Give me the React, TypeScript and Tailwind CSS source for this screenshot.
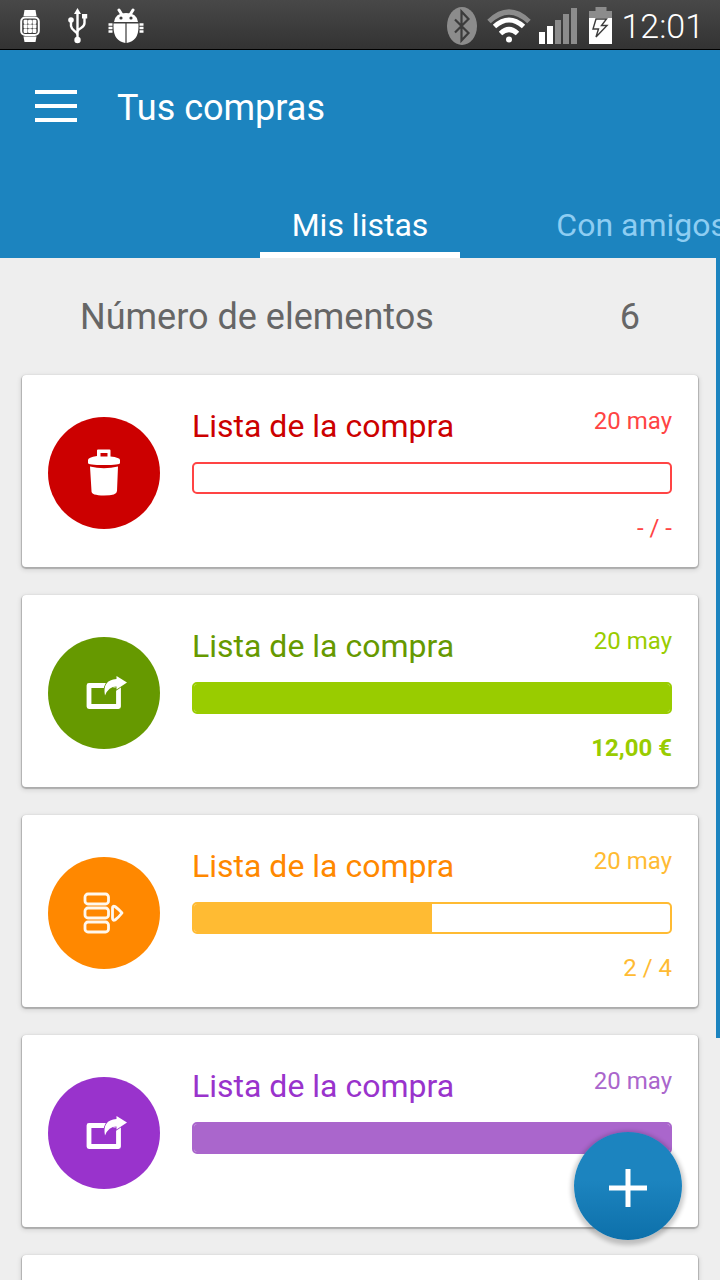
import type { ReactNode } from 'react';

// ============================================================
// Tus compras: shopping lists overview
// ============================================================

type ListColor = 'red' | 'green' | 'orange' | 'purple';

interface ShoppingList {
  id: number;
  title: string;
  date: string;
  color: ListColor;
  icon: ReactNode;
  progress: number;
  label: string;
  bold?: boolean;
}

// --cut is the outline that separates the share arrow from its frame
const COLORS: Record<ListColor, { circle: string; title: string; text: string; border: string; fill: string }> = {
  red: { circle: 'bg-[#cc0000] [--cut:#cc0000]', title: 'text-[#cc0000]', text: 'text-[#ff4444]', border: 'border-[#ff4444]', fill: 'bg-[#ff4444]' },
  green: { circle: 'bg-[#669900] [--cut:#669900]', title: 'text-[#669900]', text: 'text-[#99cc00]', border: 'border-[#99cc00]', fill: 'bg-[#99cc00]' },
  orange: { circle: 'bg-[#ff8800] [--cut:#ff8800]', title: 'text-[#ff8800]', text: 'text-[#ffbb33]', border: 'border-[#ffbb33]', fill: 'bg-[#ffbb33]' },
  purple: { circle: 'bg-[#9933cc] [--cut:#9933cc]', title: 'text-[#9933cc]', text: 'text-[#aa66cc]', border: 'border-[#aa66cc]', fill: 'bg-[#aa66cc]' },
};

// ---- List icons ----

const TrashIcon = () => (
  <svg viewBox="0 0 48 48" className="size-12" fill="currentColor" aria-hidden="true">
    <path fillRule="evenodd" d="M17 7V1.5Q17 .5 18 .5H29.500Q30.500 .5 30.500 1.500V7.500Q40 8.500 40 11V14Q40 16 24 16T8 14V11Q8 8.500 17 7ZM20.500 4V7.500H27.500V4Z" />
    <path d="M10 17.500Q24 21 38 17.500L37 42Q37 46.500 24 46.500T11.500 42Z" />
  </svg>
);

const ShareIcon = () => (
  <svg viewBox="0 0 48 48" className="size-12" aria-hidden="true">
    <path d="M9 16.500H38.500V37.500H9Z" fill="none" stroke="currentColor" strokeWidth="4.800" strokeLinejoin="round" />
    <path
      d="M36.500 7L47 13.500L36.500 20.500V17.500Q28.500 17.500 25 26.500Q22 11 36.500 10Z"
      fill="currentColor" stroke="var(--cut)" strokeWidth="1.600" paintOrder="stroke"
    />
  </svg>
);

const SortIcon = () => (
  <svg viewBox="0 0 48 48" className="size-12" fill="none" stroke="#fff8ee" strokeWidth="2.800" strokeLinejoin="round" aria-hidden="true">
    <rect x="5" y="5" width="23.500" height="10" rx="3" />
    <rect x="5" y="19" width="23.500" height="10" rx="3" />
    <rect x="5" y="33" width="23.500" height="10" rx="3" />
    <path d="M32.500 19Q32.500 16.500 35 17.500Q38.500 20 42 24Q38.500 28.500 35 31Q32.500 32 32.500 29Z" />
  </svg>
);

const LISTS: ShoppingList[] = [
  { id: 1, title: 'Lista de la compra', date: '20 may', color: 'red', icon: <TrashIcon />, progress: 0, label: '- / -' },
  { id: 2, title: 'Lista de la compra', date: '20 may', color: 'green', icon: <ShareIcon />, progress: 100, label: '12,00 €', bold: true },
  { id: 3, title: 'Lista de la compra', date: '20 may', color: 'orange', icon: <SortIcon />, progress: 50, label: '2 / 4' },
  { id: 4, title: 'Lista de la compra', date: '20 may', color: 'purple', icon: <ShareIcon />, progress: 100, label: '' },
];

// ---- Status bar ----

const WatchIcon = () => (
  <svg viewBox="0 0 20 32" className="h-8 w-5" fill="#fff" aria-hidden="true">
    <path d="M4.500 0H15.500L16.500 6H3.500ZM3.500 26.500H16.500L15.500 32H4.500Z" />
    <rect x="1.200" y="7.500" width="17.600" height="17.500" rx="4" fill="none" stroke="#fff" strokeWidth="2" />
    {[9.8, 14.3, 18.8].map((y) => [3.6, 8, 12.4].map((x) => (
      <rect key={`${x}-${y}`} x={x} y={y} width="4" height="4.100" rx="1" />
    )))}
  </svg>
);

const UsbIcon = () => (
  <svg viewBox="0 0 20 36" className="h-9 w-5" fill="#fff" aria-hidden="true">
    <path d="M9.500 0L13 6H6Z" />
    <path d="M9.500 4V31M9.500 27Q9.500 25 6.500 23T3 18V12M9.500 24Q9.500 22 13 20T16.500 15V8" fill="none" stroke="#fff" strokeWidth="2.400" />
    <circle cx="9.500" cy="32" r="3.200" />
    <circle cx="3" cy="12" r="2.800" />
    <rect x="14" y="6" width="5.200" height="4.500" />
  </svg>
);

const BugIcon = () => (
  <svg viewBox="0 0 36 36" className="size-9" aria-hidden="true">
    <path d="M11 2L13.500 6M25 2L22.500 6" stroke="#fff" strokeWidth="3" strokeLinecap="round" />
    <path d="M6 14Q7 5 18 5T30 14Z" fill="#fff" />
    <circle cx="13" cy="10" r="1.600" fill="#3e3e3e" />
    <circle cx="23" cy="10" r="1.600" fill="#3e3e3e" />
    <path d="M5.500 15.500H17.400V35Q5.500 33 5.500 19ZM18.600 15.500H30.500V19Q30.500 33 18.600 35Z" fill="#fff" />
    <path d="M.500 16.500H4.500M.500 20H4.500M.500 23.500H4.500M31.500 16.500H35.500M31.500 20H35.500M31.500 23.500H35.500" stroke="#fff" strokeWidth="2.400" />
  </svg>
);

const BluetoothIcon = () => (
  <svg viewBox="0 0 30 38" className="mr-0.5 h-[38px] w-[30px]" aria-hidden="true">
    <ellipse cx="15" cy="19" rx="15" ry="19" fill="#8c8c8c" />
    <path d="M8 12.500L21.500 26L14.500 33.500V4.500L21.500 12L8 25.500" fill="none" stroke="#3c3c3c" strokeWidth="2.200" />
  </svg>
);

const WifiIcon = () => (
  <svg viewBox="0 0 44 36" className="h-9 w-11" fill="none" strokeWidth="5" aria-hidden="true">
    <path d="M2 13.500Q22 -5.500 42 13.500" stroke="#8c8c8c" />
    <path d="M7.500 18.500Q22 5.500 36.500 18.500M13.500 25.500Q22 17.500 30.500 25.500" stroke="#fff" />
    <circle cx="22" cy="31.500" r="3" fill="#fff" />
  </svg>
);

const SignalIcon = () => (
  <svg viewBox="0 0 38 36" className="h-9 w-[38px]" aria-hidden="true">
    <path d="M0 24H6V36H0ZM8 18H14V36H8Z" fill="#fff" />
    <path d="M16 12H22V36H16ZM24 6H30V36H24ZM32 0H38V36H32Z" fill="#8c8c8c" />
  </svg>
);

const BatteryIcon = () => (
  <svg viewBox="0 0 24 37" className="ml-1 h-[37px] w-6" aria-hidden="true">
    <path d="M6.500 0H17.500V4H23V11H0V4H6.500Z" fill="#8c8c8c" />
    <path d="M0 11H23V37H0Z" fill="#fff" />
    <path d="M7 12L4 22H9.500L7 30L18 18.500H12.500L17.500 12Z" fill="none" stroke="#3c3c3c" strokeWidth="1.400" />
  </svg>
);

const StatusBar = () => (
  <div className="flex h-[50px] shrink-0 items-center justify-between border-b border-black bg-linear-to-b from-[#484848] to-[#333333] pt-0.5 pr-4 pl-5">
    <div className="flex items-center gap-7">
      <WatchIcon />
      <UsbIcon />
      <div className="-ml-2"><BugIcon /></div>
    </div>
    <div className="flex items-center gap-2">
      <BluetoothIcon />
      <WifiIcon />
      <SignalIcon />
      <BatteryIcon />
      <time className="text-[34px] leading-10 font-light text-white">12:01</time>
    </div>
  </div>
);

// ---- Card ----

const ListCard = ({ list }: { list: ShoppingList }) => {
  const c = COLORS[list.color];
  return (
    <li className="flex h-48 shrink-0 gap-8 rounded bg-white px-[26px] pt-[31px] shadow-[0_1px_1px_1px_rgba(0,0,0,0.22),0_2px_4px_2px_rgba(0,0,0,0.08)]">
      <button type="button" aria-label="Abrir lista"
        className={`mt-[11px] flex size-28 shrink-0 items-center justify-center rounded-full text-white ${c.circle}`}>
        {list.icon}
      </button>
      <div className="min-w-0 flex-1">
        <div className="flex items-start justify-between">
          <h2 className={`text-[32px] leading-10 ${c.title}`}>{list.title}</h2>
          <span className={`text-2xl leading-[30px] ${c.text}`}>{list.date}</span>
        </div>
        <div role="progressbar" aria-label={list.title} aria-valuenow={list.progress} aria-valuemin={0} aria-valuemax={100}
          className={`mt-4 h-8 overflow-hidden rounded-[5px] border-2 ${c.border}`}>
          <div className={`h-full ${c.fill}`} style={{ width: `${list.progress}%` }} />
        </div>
        <p className={`mt-4 text-right text-2xl leading-9 ${list.bold ? 'font-bold' : ''} ${c.text}`}>{list.label}</p>
      </div>
    </li>
  );
};

export default function App() {
  return (
    <div className="flex h-screen flex-col overflow-hidden bg-[#eeeeee] font-[Roboto,sans-serif]">
      <StatusBar />

      <header className="shrink-0 bg-[#1c84bf]">
        <div className="flex h-28 items-center gap-10 px-[35px]">
          <button type="button" aria-label="Menú" className="text-white">
            <svg viewBox="0 0 42 32" className="h-8 w-[42px]" fill="currentColor" aria-hidden="true">
              <path d="M0 0H42V4H0ZM0 14H42V18H0ZM0 28H42V32H0Z" />
            </svg>
          </button>
          <h1 className="pt-1 text-4xl text-white">Tus compras</h1>
        </div>

        <div role="tablist" className="grid h-24 grid-cols-[minmax(0,1fr)_auto_minmax(0,1fr)] overflow-hidden text-[32px] leading-10">
          <span />
          <button type="button" role="tab" aria-selected="true"
            className="border-b-6 border-white px-8 pt-10 pb-1 text-white">
            Mis listas
          </button>
          <button type="button" role="tab" aria-selected="false"
            className="pt-10 pb-2.5 pl-24 text-left whitespace-nowrap text-[#8ecdf2]">
            Con amigos
          </button>
        </div>
      </header>

      <main className="relative min-h-0 flex-1 overflow-hidden">
        <div className="flex h-[117px] items-center justify-between px-20 text-4xl text-[#666666]">
          <span>Número de elementos</span>
          <span>6</span>
        </div>
        <ul className="flex flex-col gap-7 px-[22px]">
          {LISTS.map((list) => <ListCard key={list.id} list={list} />)}
          <li className="h-48 shrink-0 rounded bg-white shadow-[0_1px_1px_1px_rgba(0,0,0,0.22),0_2px_4px_2px_rgba(0,0,0,0.08)]" />
        </ul>
        {/* scroll indicator */}
        <div className="absolute top-0 right-0 h-[76.3%] w-1 bg-[#1c84bf]" />
      </main>

      <button type="button" aria-label="Añadir lista"
        className="fixed right-[38px] bottom-10 flex size-27 items-center justify-center rounded-full bg-linear-to-b from-[#1c84bf] from-45% to-[#0d70aa] pt-1 text-white shadow-[0_2px_4px_3px_rgba(0,0,0,0.2)]">
        <svg viewBox="0 0 38 38" className="size-[38px]" fill="currentColor" aria-hidden="true">
          <path d="M16.500 0H21.500V16.500H38V21.500H21.500V38H16.500V21.500H0V16.500H16.500Z" />
        </svg>
      </button>
    </div>
  );
}
